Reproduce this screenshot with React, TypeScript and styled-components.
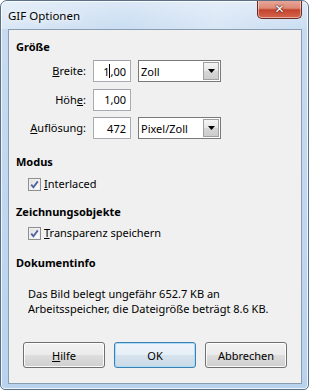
import { ReactNode } from "react";
import { createGlobalStyle, styled } from "styled-components";

const uiFont = `"Segoe UI", "Noto Sans", "Liberation Sans", sans-serif`;

const GlobalStyle = createGlobalStyle`
  html, body {
    margin: 0;
    padding: 0;
    background: #ffffff;
  }
  body {
    font-family: ${uiFont};
    font-size: 11px;
    color: #000000;
  }
`;

function Key({ children }: { children: ReactNode }) {
  return <u>{children}</u>;
}

function CheckIcon() {
  return (
    <svg width="9" height="9" viewBox="0 0 9 9">
      <path d="M1.2 4.6 L3.4 7.2 L7.8 1.4" fill="none" stroke="#4f66a0" strokeWidth="1.9" />
    </svg>
  );
}

function ArrowIcon() {
  return (
    <svg width="7" height="4" viewBox="0 0 7 4">
      <path d="M0 0 H7 L3.5 4 Z" fill="#000000" />
    </svg>
  );
}

export default function App() {
  return (
    <>
      <GlobalStyle />
      <Window>
        <TitleBar>
          <Title>GIF Optionen</Title>
          <CloseButton aria-label="Schließen">✕</CloseButton>
        </TitleBar>
        <Frame>
          <Client>
            <Heading $top={9}>Größe</Heading>
            <FormGrid>
              <Label>
                <Key>B</Key>reite:
              </Label>
              <TextBox>
                1<Caret />,00
              </TextBox>
              <Combo>
                <ComboText>Zoll</ComboText>
                <ComboButton>
                  <ArrowIcon />
                </ComboButton>
              </Combo>

              <Label>
                Höh<Key>e</Key>:
              </Label>
              <TextBox>1,00</TextBox>
              <span />

              <Label>
                <Key>A</Key>uflösung:
              </Label>
              <TextBox>472</TextBox>
              <Combo>
                <ComboText>Pixel/Zoll</ComboText>
                <ComboButton>
                  <ArrowIcon />
                </ComboButton>
              </Combo>
            </FormGrid>

            <Heading $top={15}>Modus</Heading>
            <CheckRow $top={6}>
              <CheckBox>
                <CheckIcon />
              </CheckBox>
              <span>
                <Key>I</Key>nterlaced
              </span>
            </CheckRow>

            <Heading $top={12}>Zeichnungsobjekte</Heading>
            <CheckRow $top={5}>
              <CheckBox>
                <CheckIcon />
              </CheckBox>
              <span>
                <Key>T</Key>ransparenz speichern
              </span>
            </CheckRow>

            <Heading $top={14}>Dokumentinfo</Heading>
            <InfoText>
              Das Bild belegt ungefähr 652.7 KB an
              <br />
              Arbeitsspeicher, die Dateigröße beträgt 8.6 KB.
            </InfoText>

            <ButtonRow>
              <Button>
                <Key>H</Key>ilfe
              </Button>
              <Button $default>OK</Button>
              <Button>Abbrechen</Button>
            </ButtonRow>
          </Client>
        </Frame>
      </Window>
    </>
  );
}

const Window = styled.div`
  width: 309px;
  height: 390px;
  box-sizing: border-box;
  display: flex;
  flex-direction: column;
  border: 1px solid #5b7086;
  border-radius: 7px 7px 5px 5px;
  background: linear-gradient(180deg, #d9e7f6 0px, #c6dbf1 30px, #b9d3ee 100%);
  box-shadow: inset 0 0 0 1px rgba(255, 255, 255, 0.75);
  overflow: hidden;
`;

const TitleBar = styled.div`
  height: 28px;
  display: flex;
  justify-content: space-between;
  align-items: flex-start;
  padding: 0 6px 0 7px;
  background: linear-gradient(
    100deg,
    rgba(255, 255, 255, 0.35) 0%,
    rgba(255, 255, 255, 0.05) 40%,
    rgba(255, 255, 255, 0.3) 70%,
    rgba(255, 255, 255, 0.05) 100%
  );
`;

const Title = styled.div`
  margin-top: 7px;
  font-size: 11.5px;
  line-height: 16px;
  color: #000000;
  text-shadow: 0 0 6px #ffffff, 0 0 10px rgba(255, 255, 255, 0.9);
`;

const CloseButton = styled.div`
  width: 45px;
  height: 19px;
  margin-top: -1px;
  display: flex;
  align-items: center;
  justify-content: center;
  box-sizing: border-box;
  border: 1px solid #6b2a22;
  border-top: none;
  border-radius: 0 0 5px 5px;
  background: linear-gradient(180deg, #e9a99b 0%, #dd8a77 45%, #c4432e 55%, #d4664e 100%);
  box-shadow: inset 0 0 0 1px rgba(255, 255, 255, 0.45);
  color: #ffffff;
  font-family: "DejaVu Sans", sans-serif;
  font-size: 12px;
  font-weight: bold;
  text-shadow: 0 0 1px #3a1410, 0 0 2px #3a1410;
`;

const Frame = styled.div`
  flex: 1;
  display: flex;
  padding: 0 6px 5px 7px;
`;

const Client = styled.div`
  flex: 1;
  display: flex;
  flex-direction: column;
  border: 1px solid #8a9cb0;
  background: #f0f0f0;
  padding: 0 7px;
`;

const Heading = styled.div<{ $top: number }>`
  margin-top: ${(p) => p.$top}px;
  font-weight: bold;
  line-height: 16px;
`;

const FormGrid = styled.div`
  margin-top: 5px;
  display: grid;
  grid-template-columns: 70px 38px 83px;
  grid-auto-rows: 22px;
  column-gap: 7px;
  row-gap: 6.5px;
  align-items: center;
`;

const Label = styled.div`
  text-align: right;
  line-height: 16px;
`;

const TextBox = styled.div`
  height: 22px;
  box-sizing: border-box;
  display: flex;
  align-items: center;
  justify-content: flex-end;
  padding-right: 4px;
  border: 1px solid #a9abb2;
  border-top-color: #9ea1a8;
  background: #ffffff;
`;

const Caret = styled.span`
  display: inline-block;
  width: 1px;
  height: 14px;
  background: #000000;
`;

const Combo = styled.div`
  height: 22px;
  box-sizing: border-box;
  display: flex;
  border: 1px solid #7a7a7a;
  background: #ffffff;
`;

const ComboText = styled.div`
  flex: 1;
  display: flex;
  align-items: center;
  padding-left: 2px;
`;

const ComboButton = styled.div`
  width: 16px;
  margin: 1px;
  display: flex;
  align-items: center;
  justify-content: center;
  box-sizing: border-box;
  border: 1px solid #a0a0a0;
  background: linear-gradient(180deg, #f4f4f4 0%, #e6e6e6 50%, #d6d6d6 51%, #cdcdcd 100%);
`;

const CheckRow = styled.div<{ $top: number }>`
  margin-top: ${(p) => p.$top}px;
  padding-left: 12px;
  display: flex;
  align-items: center;
  gap: 3px;
  line-height: 16px;
`;

const CheckBox = styled.div`
  width: 13px;
  height: 13px;
  box-sizing: border-box;
  display: flex;
  align-items: center;
  justify-content: center;
  border: 1px solid #8f8f8f;
  background: linear-gradient(135deg, #dcdcdc 0%, #f4f4f4 60%, #ffffff 100%);
  box-shadow: inset 0 0 0 1px #f0f0f0;
`;

const InfoText = styled.div`
  margin-top: 14.5px;
  padding-left: 12px;
  line-height: 15px;
`;

const ButtonRow = styled.div`
  margin-top: 26.5px;
  padding-left: 7px;
  display: flex;
  gap: 9px;
`;

const Button = styled.div<{ $default?: boolean }>`
  width: 82px;
  height: 26px;
  box-sizing: border-box;
  display: flex;
  align-items: center;
  justify-content: center;
  border: 1px solid ${(p) => (p.$default ? "#3c7fb1" : "#707070")};
  border-radius: 3px;
  background: ${(p) =>
    p.$default
      ? "linear-gradient(180deg, #eef5fa 0%, #e6eff6 50%, #d6e3ee 51%, #cbdae6 100%)"
      : "linear-gradient(180deg, #f2f2f2 0%, #ebebeb 50%, #dddddd 51%, #cfcfcf 100%)"};
  box-shadow: inset 0 0 0 1px ${(p) => (p.$default ? "#a9dcf6" : "rgba(255, 255, 255, 0.85)")};
`;
